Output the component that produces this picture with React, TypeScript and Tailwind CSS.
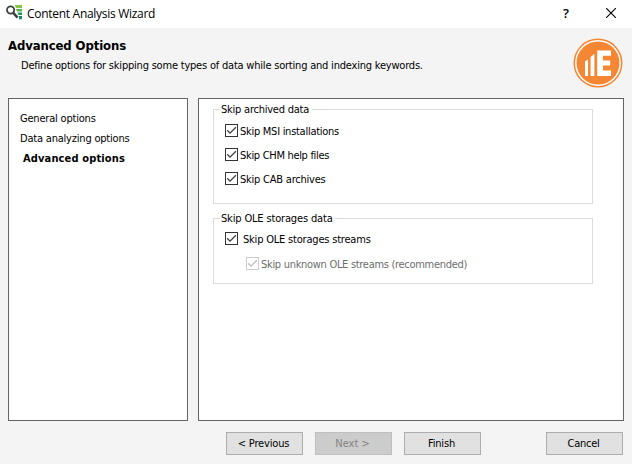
import type { ReactNode } from 'react';

type CheckProps = { children: ReactNode; disabled?: boolean; className?: string; labelClass: string };

function Check({ children, disabled = false, className = '', labelClass }: CheckProps) {
  return (
    <label className={`flex h-[13px] items-center ${disabled ? 'text-[#6d6d6d]' : 'text-black'} ${className}`}>
      <span className={`flex size-[13px] shrink-0 border bg-white ${disabled ? 'border-[#cccccc]' : 'border-[#333333]'}`}>
        <svg viewBox="0 0 11 11" className="size-[11px]" fill="none" stroke={disabled ? '#bfbfbf' : '#404040'} strokeWidth="1.3">
          <path d="M1.2 5.3 4 8.1 9.9 2.2" />
        </svg>
      </span>
      <span className={`pt-[2px] leading-[14px] whitespace-nowrap ${labelClass}`}>{children}</span>
    </label>
  );
}

type GroupProps = { title: string; className: string; titleClass: string; children: ReactNode };

function Group({ title, className, titleClass, children }: GroupProps) {
  return (
    <section className={`w-[380px] border border-[#dcdcdc] ${className}`}>
      <h2 className={`-mt-[7px] ml-[6px] h-[14px] bg-white pl-px leading-[14px] whitespace-nowrap ${titleClass}`}>{title}</h2>
      {children}
    </section>
  );
}

function WizardButton({ children, disabled = false, className = '' }: { children: ReactNode; disabled?: boolean; className?: string }) {
  return (
    <button
      disabled={disabled}
      className={`flex h-[23px] w-[77px] items-center justify-center border pt-px pr-[2px] leading-[14px] ${
        disabled ? 'border-[#bfbfbf] bg-[#cccccc] text-[#838383]' : 'border-[#adadad] bg-[#e1e1e1] text-black'
      } ${className}`}
    >
      {children}
    </button>
  );
}

function AppIcon() {
  return (
    <svg viewBox="0 0 18 20" className="h-5 w-[18px]" fill="none">
      <path d="M9.5 1H17v3h-6z" fill="#8cc63f" />
      <path d="M11 5h6v2.4h-5z" fill="#5cb04a" />
      <path d="M12.5 8.4H17v2.6h-3.5z" fill="#179b50" />
      <path d="M14 12h3v3.2h-3z" fill="#148a68" />
      <circle cx="5.6" cy="6" r="3.6" stroke="#404040" strokeWidth="1.8" />
      <path d="m8 8.6 4.6 5" stroke="#404040" strokeWidth="2.6" />
    </svg>
  );
}

function Logo() {
  return (
    <svg viewBox="0 0 50 50" className="size-[50px]">
      <circle cx="25" cy="25" r="24.5" fill="#f58634" />
      <circle cx="25" cy="25" r="22.2" fill="none" stroke="#fff" strokeWidth="1.5" />
      <path d="M12 23.5l3-2V38h-3zM17.6 19l3.8-3.2V38h-3.8zM24.2 12.5H38v5.3h-8v4.6h7.2v5.2H30v5h8V38H24.2z" fill="#fff" />
    </svg>
  );
}

export default function App() {
  return (
    <div className="flex h-[464px] w-[632px] flex-col overflow-hidden bg-[#f4f4f4] font-['DejaVu_Sans_Condensed','DejaVu_Sans',sans-serif] text-[11px] text-black">
      <header className="flex h-7 shrink-0 items-center bg-white pl-[5px]">
        <AppIcon />
        <h1 className="ml-1 grow font-['Open_Sans',sans-serif] text-[12px] leading-[16px] tracking-[-0.29px] whitespace-nowrap">Content Analysis Wizard</h1>
        <span className="mt-[-3px] w-[10px] text-center font-['Open_Sans',sans-serif] text-[13px] leading-4 font-semibold">?</span>
        <svg viewBox="0 0 10 10" className="mt-[-3px] mr-4 ml-[35px] size-[10px]" stroke="#000" strokeWidth="1.1">
          <path d="M0 0 10 10M10 0 0 10" />
        </svg>
      </header>

      <div className="flex h-[70px] shrink-0 justify-between pr-[9px] pl-2">
        <div className="pt-[10px]">
          <p className="text-[13px] leading-4 font-bold tracking-[-0.11px]">Advanced Options</p>
          <p className="mt-[5px] ml-[13px] leading-[14px] tracking-[-0.206px] whitespace-nowrap">
            Define options for skipping some types of data while sorting and indexing keywords.
          </p>
        </div>
        <div className="pt-[10px]">
          <Logo />
        </div>
      </div>

      <main className="flex h-[323px] shrink-0 gap-[10px] px-2">
        <nav className="w-[180px] border border-[#646464] bg-white pt-[10px] pl-[11px] leading-5">
          <p className="tracking-[-0.2px]">General options</p>
          <p className="tracking-[-0.2px]">Data analyzing options</p>
          <p className="ml-[3px] font-bold tracking-[0.14px]">Advanced options</p>
        </nav>
        <div className="w-[426px] border border-[#646464] bg-white pt-[10px] pl-[14px]">
          <Group title="Skip archived data" className="h-[95px]" titleClass="w-[92px] tracking-[-0.23px]">
            <div className="mt-[7px] ml-[11px] flex flex-col gap-[11px]">
              <Check labelClass="ml-[2px] tracking-[-0.27px]">Skip MSI installations</Check>
              <Check labelClass="ml-[2px] tracking-[-0.31px]">Skip CHM help files</Check>
              <Check labelClass="ml-[2px] tracking-[-0.22px]">Skip CAB archives</Check>
            </div>
          </Group>
          <Group title="Skip OLE storages data" className="mt-[14px] h-[66px]" titleClass="w-[115px] tracking-[-0.16px]">
            <div className="mt-[6px] ml-[11px] flex flex-col gap-3">
              <Check labelClass="ml-[5px] tracking-[-0.2px]">Skip OLE storages streams</Check>
              <Check disabled className="ml-[21px]" labelClass="ml-[2px] tracking-[-0.3px]">
                Skip unknown OLE streams (recommended)
              </Check>
            </div>
          </Group>
        </div>
      </main>

      <footer className="mt-[11px] flex pr-[9px] pl-[226px]">
        <WizardButton className="tracking-[-0.17px]">&lt; Previous</WizardButton>
        <WizardButton disabled className="ml-3">Next &gt;</WizardButton>
        <WizardButton className="ml-3 tracking-[-0.18px]">Finish</WizardButton>
        <WizardButton className="ml-auto tracking-[-0.25px]">Cancel</WizardButton>
      </footer>
    </div>
  );
}
